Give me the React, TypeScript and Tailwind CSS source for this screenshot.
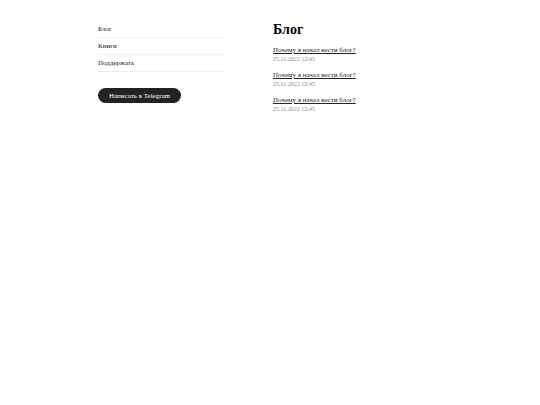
const navItems = ["Блог", "Книги", "Поддержать"];

const posts = [
  { id: 1, title: "Почему я начал вести блог?", date: "25.11.2022 12:45" },
  { id: 2, title: "Почему я начал вести блог?", date: "25.11.2022 12:45" },
  { id: 3, title: "Почему я начал вести блог?", date: "25.11.2022 12:45" },
];

export default function App() {
  return (
    <div className="min-h-screen bg-white font-['Liberation_Serif',serif] text-[7px] leading-4 text-[#222]">
      <div className="mx-auto flex max-w-[344px] items-start gap-12 pt-[21px]">
        <aside className="w-[127px] shrink-0">
          <nav>
            <ul>
              {navItems.map((item) => (
                <li key={item} className="border-b border-[#eee]">
                  <a href="#" className="block">{item}</a>
                </li>
              ))}
            </ul>
          </nav>
          <button type="button" className="mt-4 h-[15px] rounded-full bg-[#222] px-[11px] leading-4 text-white">
            Написать в Telegram
          </button>
        </aside>
        <main className="min-w-0 flex-1">
          <h1 className="text-[14px] leading-[17px] font-bold text-black">Блог</h1>
          <ul className="mt-2 flex flex-col gap-[7px]">
            {posts.map((post) => (
              <li key={post.id}>
                <a href="#" className="block leading-[9px] underline">{post.title}</a>
                <time className="block text-[6px] leading-[9px] text-[#888]">{post.date}</time>
              </li>
            ))}
          </ul>
        </main>
      </div>
    </div>
  );
}
